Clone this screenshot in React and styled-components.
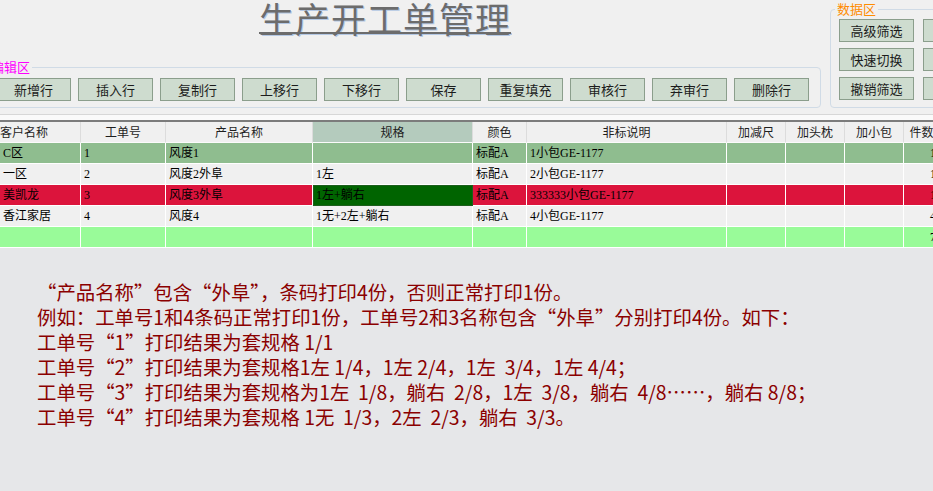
import React from 'react';
import styled, { createGlobalStyle } from 'styled-components';

const GlobalStyle = createGlobalStyle`
  html, body {
    margin: 0;
    padding: 0;
    background: #f0f0f0;
    overflow: hidden;
  }
  body {
    font-family: "Noto Sans CJK SC", "Noto Sans", sans-serif;
  }
`

const Page = styled.div`
  display: flex;
  flex-direction: column;
  min-height: 100vh;
  width: 100%;
  overflow: hidden;
`

const TopBar = styled.div`
  display: flex;
  align-items: flex-start;
  flex-shrink: 0;
`

const LeftCol = styled.div`
  display: flex;
  flex-direction: column;
  flex-shrink: 0;
  width: 835px;
  margin-left: -14px;
`

const Title = styled.h1`
  margin: 0 0 24px;
  padding-left: 273px;
  font-size: 35px;
  line-height: 36px;
  font-weight: 400;
  letter-spacing: 1px;
  color: #6c6c6c;
  text-shadow: 1px 1px 0 #b4c8e4;
  white-space: nowrap;

  span {
    text-decoration: underline;
    text-decoration-thickness: 2px;
    text-underline-offset: -1px;
  }
`

const Group = styled.fieldset`
  box-sizing: border-box;
  margin: ${p => p.$top}px 0 0 ${p => p.$left}px;
  padding: ${p => p.$pad};
  border: 1px solid #d0dbe6;
  border-radius: 4px;
  min-width: 0;
  flex-shrink: 0;
  width: ${p => p.$width}px;
`

const Legend = styled.legend`
  margin-left: ${p => p.$shift}px;
  padding: 0 2px;
  font-size: 13px;
  line-height: 14px;
  color: ${p => p.$color};
`

const ButtonRow = styled.div`
  display: flex;
  gap: 7px;
`

const ButtonGrid = styled.div`
  display: grid;
  grid-template-columns: repeat(2, 75px);
  column-gap: 9px;
  row-gap: 6px;
`

const Btn = styled.button`
  appearance: none;
  box-sizing: border-box;
  flex-shrink: 0;
  width: 75px;
  height: 23px;
  padding: 0;
  border: 1px solid #8b9e8c;
  background: #cedccf;
  color: #1c1c1c;
  font-family: "Noto Sans CJK SC", sans-serif;
  font-size: 13px;
  line-height: 21px;
  white-space: nowrap;
`

const Divider = styled.div`
  flex-shrink: 0;
  margin-top: 6px;
  height: 5px;
  border-top: 1px solid #d7d7d7;
  background: #fafafa;
`

const Sheet = styled.div`
  flex: 1;
  display: flex;
  flex-direction: column;
  background: #e6e7e9;
`

const Grid = styled.div`
  display: grid;
  grid-template-columns: 81px 85px 147px 160px 54px 200px 59px 59px 59px 36px;
  border-top: 2px solid #7c7c7c;
  width: max-content;
`

const tones = {
  done: '#8fbd8f',
  plain: '#f0f0f0',
  alert: '#dc143c',
  total: '#99fb99',
}

const HeadCell = styled.div`
  box-sizing: border-box;
  height: 21px;
  padding: 0 ${p => (p.$align === 'left' ? 0 : 3)}px;
  border-right: 1px solid #dcdcdc;
  border-bottom: 1px solid #fbfbfb;
  background: ${p => (p.$selected ? '#b4cbbd' : '#f0f0f0')};
  color: #1e1e1e;
  font-size: 12px;
  line-height: 20px;
  text-align: ${p => p.$align || 'center'};
  white-space: nowrap;
  overflow: hidden;
`

const Cell = styled.div`
  box-sizing: border-box;
  height: 21px;
  padding: 0 3px;
  border-right: 1px solid #fff;
  border-bottom: 1px solid #fff;
  background: ${p => (p.$active ? '#006400' : tones[p.$tone])};
  outline: ${p => (p.$active ? '1px solid #1d5e1d' : 'none')};
  outline-offset: -1px;
  color: #000;
  font-family: "Liberation Serif", "Noto Sans CJK SC", serif;
  font-size: 12px;
  line-height: 20px;
  text-align: ${p => p.$align || 'left'};
  white-space: nowrap;
  overflow: hidden;
`

const Notes = styled.div`
  padding: 31px 0 0 37px;
  color: #8b0000;
  font-size: 19.4px;
  line-height: 25px;
  white-space: pre;
`

const editButtons = ['新增行', '插入行', '复制行', '上移行', '下移行', '保存', '重复填充', '审核行', '弃审行', '删除行']
const dataButtons = ['高级筛选', '', '快速切换', '', '撤销筛选', '']

const columns = [
  { key: 'customer', title: '客户名称', headAlign: 'left' },
  { key: 'no', title: '工单号' },
  { key: 'product', title: '产品名称' },
  { key: 'spec', title: '规格', selected: true },
  { key: 'color', title: '颜色' },
  { key: 'note', title: '非标说明' },
  { key: 'cut', title: '加减尺' },
  { key: 'pillow', title: '加头枕' },
  { key: 'bag', title: '加小包' },
  { key: 'qty', title: '件数', align: 'right' },
]

const rows = [
  { tone: 'done', customer: 'C区', no: '1', product: '风度1', spec: '', color: '标配A', note: '1小包GE-1177', qty: '1' },
  { tone: 'plain', customer: '一区', no: '2', product: '风度2外阜', spec: '1左', color: '标配A', note: '2小包GE-1177', qty: '1' },
  { tone: 'alert', customer: '美凯龙', no: '3', product: '风度3外阜', spec: '1左+躺右', color: '标配A', note: '333333小包GE-1177', qty: '1', active: 'spec' },
  { tone: 'plain', customer: '香江家居', no: '4', product: '风度4', spec: '1无+2左+躺右', color: '标配A', note: '4小包GE-1177', qty: '4' },
  { tone: 'total', qty: '7' },
]

const notes = [
  '“产品名称”包含“外阜”，条码打印4份，否则正常打印1份。',
  '例如：工单号1和4条码正常打印1份，工单号2和3名称包含“外阜”分别打印4份。如下：',
  '工单号“1”打印结果为套规格 1/1',
  '工单号“2”打印结果为套规格1左 1/4，1左 2/4，1左  3/4，1左 4/4；',
  '工单号“3”打印结果为套规格为1左  1/8，躺右  2/8，1左  3/8，躺右  4/8……，躺右 8/8；',
  '工单号“4”打印结果为套规格 1无  1/3，2左  2/3，躺右  3/3。',
]

const App = () => (
  <Page>
    <GlobalStyle />
    <TopBar>
      <LeftCol>
        <Title><span>生产开工单管理</span></Title>
        <Group $top={0} $left={0} $width={835} $pad="4px 11px 6px 9px">
          <Legend $color="#ff00ff" $shift={-7}>编辑区</Legend>
          <ButtonRow>
            {editButtons.map(label => <Btn key={label}>{label}</Btn>)}
          </ButtonRow>
        </Group>
      </LeftCol>
      <Group $top={2} $left={9} $width={190} $pad="3px 8px 7px 8px">
        <Legend $color="#ff8c00" $shift={-4}>数据区</Legend>
        <ButtonGrid>
          {dataButtons.map((label, i) => <Btn key={i}>{label}</Btn>)}
        </ButtonGrid>
      </Group>
    </TopBar>
    <Divider />
    <Sheet>
      <Grid>
        {columns.map(col => (
          <HeadCell key={col.key} $align={col.headAlign} $selected={col.selected}>{col.title}</HeadCell>
        ))}
        {rows.map((row, r) => columns.map(col => (
          <Cell key={r + col.key} $tone={row.tone} $align={col.align} $active={row.active === col.key}>
            {row[col.key] || ''}
          </Cell>
        )))}
      </Grid>
      <Notes>{notes.join('\n')}</Notes>
    </Sheet>
  </Page>
)

export default App;
